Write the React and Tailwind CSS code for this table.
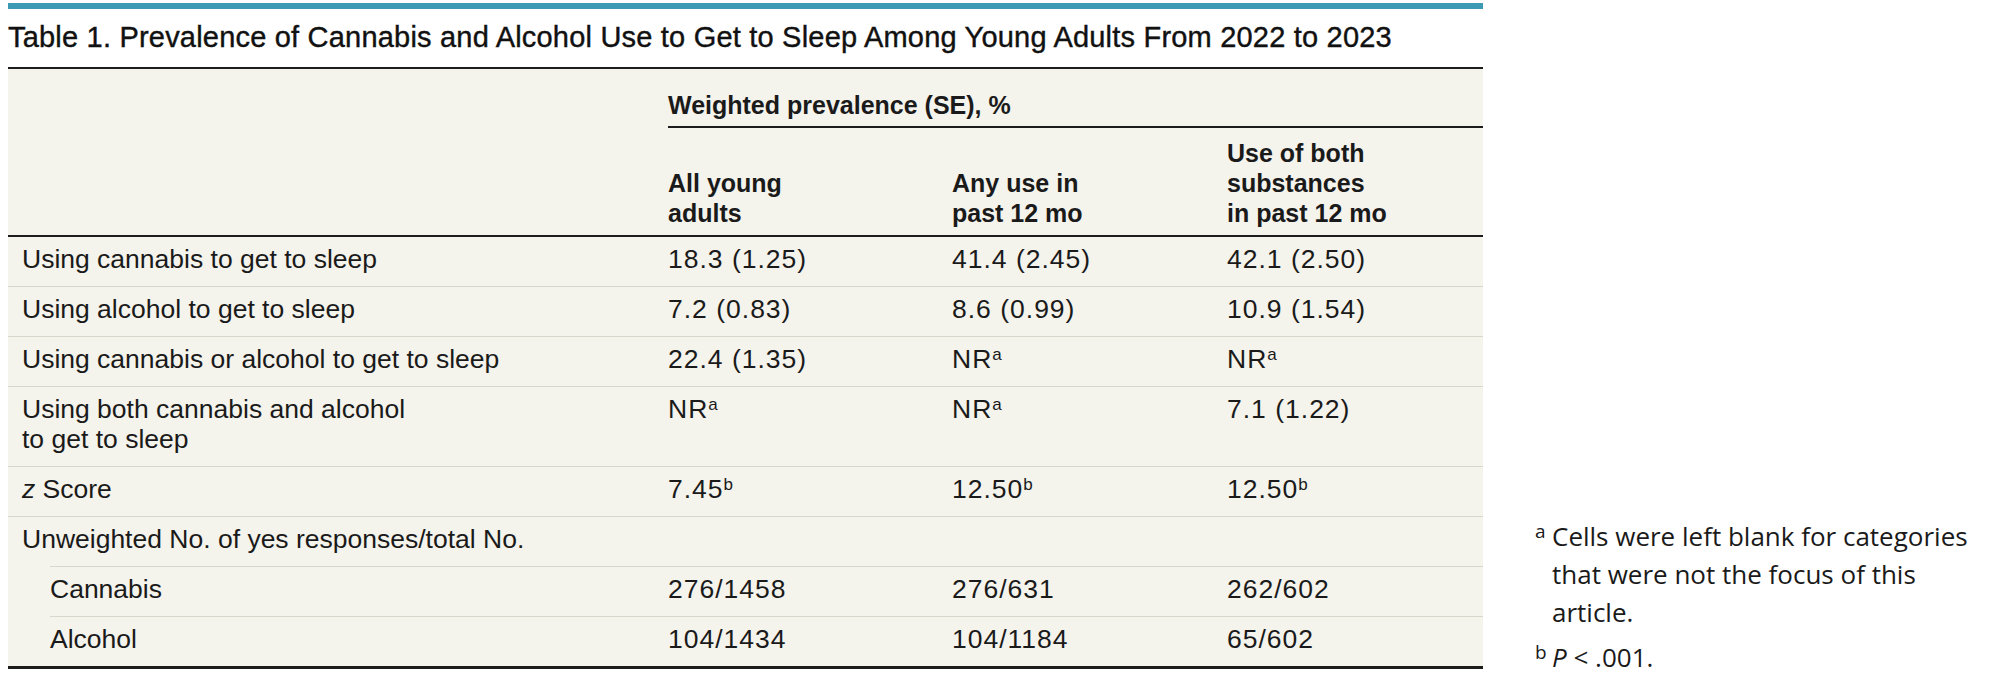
import React from "react";

const rows = [
  { label: "Using cannabis to get to sleep", vals: ["18.3 (1.25)", "41.4 (2.45)", "42.1 (2.50)"] },
  { label: "Using alcohol to get to sleep", vals: ["7.2 (0.83)", "8.6 (0.99)", "10.9 (1.54)"] },
  { label: "Using cannabis or alcohol to get to sleep", vals: ["22.4 (1.35)", ["NR", "a"], ["NR", "a"]] },
  {
    label: (
      <>
        Using both cannabis and alcohol
        <br />
        to get to sleep
      </>
    ),
    vals: [["NR", "a"], ["NR", "a"], "7.1 (1.22)"],
  },
  {
    label: (
      <>
        <i>z</i> Score
      </>
    ),
    vals: [["7.45", "b"], ["12.50", "b"], ["12.50", "b"]],
  },
  { label: "Unweighted No. of yes responses/total No.", vals: ["", "", ""] },
  { label: "Cannabis", vals: ["276/1458", "276/631", "262/602"], indent: true },
  { label: "Alcohol", vals: ["104/1434", "104/1184", "65/602"], indent: true },
];

const Cell = ({ v }) => {
  if (Array.isArray(v)) {
    return (
      <span>
        {v[0]}
        <sup className="text-[17px] tracking-normal">{v[1]}</sup>
      </span>
    );
  }
  return <span>{v}</span>;
};

const App = () => {
  return (
    <div className="flex w-[2000px] bg-white text-[#1a1a1a] [font-family:'Liberation_Sans',Arial,sans-serif]">
      {/* table column */}
      <div className="ml-[8px] w-[1475px] pt-[3px]">
        <div className="h-[6px] bg-[#3d9ab4]" />
        <h1 className="mt-[10px] text-[29px] leading-[36px] tracking-[0.2px] text-[#111] [-webkit-text-stroke:0.4px_#111]">
          Table 1. Prevalence of Cannabis and Alcohol Use to Get to Sleep Among Young Adults From 2022 to 2023
        </h1>

        <div className="mt-[12px] border-t-2 border-b-[3px] border-[#1c1c1c] bg-[#f4f3ec]">
          {/* header */}
          <div className="grid grid-cols-[660px_1fr] border-b-2 border-[#1c1c1c]">
            <div />
            <div>
              <div className="pt-[21px] pb-[6px] text-[25px] font-bold leading-[30px]">
                Weighted prevalence (SE), %
              </div>
              <div className="grid grid-cols-[284px_275px_1fr] items-end border-t-2 border-[#1c1c1c] pt-[10px] pb-[7px] text-[25px] font-bold leading-[30px]">
                <div>
                  All young
                  <br />
                  adults
                </div>
                <div>
                  Any use in
                  <br />
                  past 12 mo
                </div>
                <div>
                  Use of both
                  <br />
                  substances
                  <br />
                  in past 12 mo
                </div>
              </div>
            </div>
          </div>

          {/* body */}
          {rows.map((r, i) => (
            <div
              key={i}
              className={
                "grid pt-[7px] pb-[12px] text-[26.5px] leading-[30px] " +
                (i > 0 ? "border-t border-[#d9d6cb] " : "") +
                (r.indent ? "ml-[42px] grid-cols-[618px_284px_275px_1fr]" : "grid-cols-[660px_284px_275px_1fr]")
              }
            >
              <div className={r.indent ? "" : "pl-[14px]"}>{r.label}</div>
              {r.vals.map((v, j) => (
                <div key={j} className="tracking-[1px]">
                  <Cell v={v} />
                </div>
              ))}
            </div>
          ))}
        </div>
      </div>

      {/* footnotes */}
      <div className="ml-[52px] -mb-[7px] self-end text-[26px] leading-[38px] text-[#1a1a1a] [font-family:'Open_Sans',sans-serif]">
        <div className="flex">
          <span className="w-[17px] text-[19px] leading-[28px]">a</span>
          <p className="w-[430px]">Cells were left blank for categories that were not the focus of this article.</p>
        </div>
        <div className="mt-[7px] flex">
          <span className="w-[17px] text-[19px] leading-[28px]">b</span>
          <p>
            <i>P</i> &lt; .001.
          </p>
        </div>
      </div>
    </div>
  );
};

export default App;
